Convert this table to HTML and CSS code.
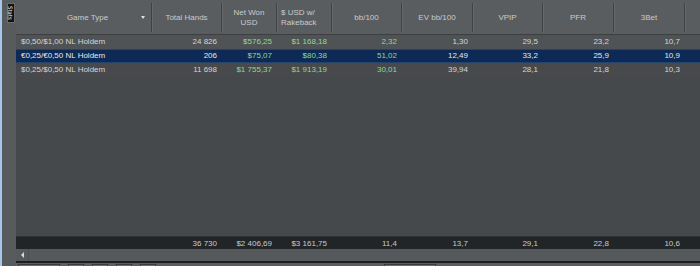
FILE: index.html
```html
<!DOCTYPE html>
<html>
<head>
<meta charset="utf-8">
<link rel="stylesheet" href="styles.css">
</head>
<body>
<div class="app">
  <div class="edge"></div>
  <div class="sidebar"><div class="tab">Stats</div></div>
  <div class="main">
    <div class="grid header">
      <div class="hc gt">Game Type<span class="arrow"></span></div>
      <div class="hc">Total Hands</div>
      <div class="hc">Net Won<br>USD</div>
      <div class="hc left">$ USD w/<br>Rakeback</div>
      <div class="hc">bb/100</div>
      <div class="hc">EV bb/100</div>
      <div class="hc">VPIP</div>
      <div class="hc">PFR</div>
      <div class="hc">3Bet</div>
      <div class="hc last"></div>
    </div>
    <div class="grid row odd">
      <div class="c l">$0,50/$1,00 NL Holdem</div>
      <div class="c">24 826</div>
      <div class="c g">$576,25</div>
      <div class="c g">$1 168,18</div>
      <div class="c g">2,32</div>
      <div class="c">1,30</div>
      <div class="c">29,5</div>
      <div class="c">23,2</div>
      <div class="c">10,7</div>
      <div class="c"></div>
    </div>
    <div class="grid row sel">
      <div class="c l">€0,25/€0,50 NL Holdem</div>
      <div class="c">206</div>
      <div class="c g">$75,07</div>
      <div class="c g">$80,38</div>
      <div class="c g">51,02</div>
      <div class="c">12,49</div>
      <div class="c">33,2</div>
      <div class="c">25,9</div>
      <div class="c">10,9</div>
      <div class="c"></div>
    </div>
    <div class="grid row even">
      <div class="c l">$0,25/$0,50 NL Holdem</div>
      <div class="c">11 698</div>
      <div class="c g">$1 755,37</div>
      <div class="c g">$1 913,19</div>
      <div class="c g">30,01</div>
      <div class="c">39,94</div>
      <div class="c">28,1</div>
      <div class="c">21,8</div>
      <div class="c">10,3</div>
      <div class="c"></div>
    </div>
    <div class="filler"></div>
    <div class="grid row total">
      <div class="c l"></div>
      <div class="c">36 730</div>
      <div class="c">$2 406,69</div>
      <div class="c">$3 161,75</div>
      <div class="c">11,4</div>
      <div class="c">13,7</div>
      <div class="c">29,1</div>
      <div class="c">22,8</div>
      <div class="c">10,6</div>
      <div class="c"></div>
    </div>
    <div class="hscroll"><div class="sbtn"><span class="larrow"></span></div></div>
    <div class="bottom">
      <div class="bseg w1"></div>
      <div class="bseg w2"></div>
      <div class="bseg w2"></div>
      <div class="bseg w2"></div>
      <div class="bseg w2"></div>
      <div class="bseg w3"></div>
    </div>
  </div>
</div>
</body>
</html>
```

FILE: styles.css
```css
html, body {
  margin: 0;
  padding: 0;
  width: 700px;
  height: 266px;
  overflow: hidden;
  background: #46494b;
  font-family: "Liberation Sans", Arial, sans-serif;
  font-size: 8px;
}
.app {
  display: flex;
  height: 266px;
}
.edge {
  width: 2px;
  background: #a7c6ec;
}
.sidebar {
  width: 14px;
  background: #585b5e;
  display: flex;
  justify-content: flex-end;
  align-items: flex-start;
  padding-top: 3px;
  box-sizing: border-box;
}
.tab {
  writing-mode: vertical-rl;
  background: #111213;
  color: #f0f0f0;
  font-family: "DejaVu Sans Condensed", "DejaVu Sans", sans-serif;
  font-size: 6px;
  width: 8px;
  height: 20px;
  line-height: 7px;
  text-align: center;
  margin-right: 1px;
  border: 1px solid #6a6d70;
  box-sizing: border-box;
}
.main {
  flex: 1;
  display: flex;
  flex-direction: column;
  min-width: 0;
}
.grid {
  display: grid;
  grid-template-columns: 136px 70px 55px 55px 70px 71px 70px 71px 71px 1fr;
}
.header {
  height: 34px;
  background: #5a5d60;
  border-bottom: 1px solid #3d3f41;
  color: #c9cbcd;
  flex: none;
}
.hc {
  display: flex;
  align-items: center;
  justify-content: center;
  text-align: center;
  line-height: 10px;
  position: relative;
  border-right: 1px solid #3f4143;
  margin: 3px 0 2px;
  box-shadow: 1px 0 0 #66696c;
}
.hc.left {
  text-align: left;
  justify-content: flex-start;
  padding-left: 4px;
}
.hc.gt {
  padding-left: 8px;
}
.hc.last {
  border-right: none;
  box-shadow: none;
}
.arrow {
  position: absolute;
  right: 6px;
  top: 13px;
  width: 0;
  height: 0;
  border-left: 2.5px solid transparent;
  border-right: 2.5px solid transparent;
  border-top: 3px solid #e0e0e0;
}
.row {
  height: 14px;
  line-height: 14px;
  color: #d3d5d7;
  flex: none;
}
.row.odd { background: #505356; }
.row.even { background: #47494c; }
.row.sel {
  background: #0c2a55;
  box-shadow: inset 0 1px 0 #24446e, inset 0 -1px 0 #24446e;
  color: #e6e8ea;
}
.c {
  text-align: right;
  padding-right: 5px;
  white-space: nowrap;
  overflow: hidden;
}
.c.l {
  text-align: left;
  padding-left: 5px;
  padding-right: 0;
}
.c.g { color: #92d88e; }
.filler {
  flex: 1;
  background: #46494b;
}
.row.total {
  height: 12px;
  line-height: 13px;
  background: #222527;
  border-top: 1px solid #2e3133;
  color: #c8cacc;
}
.hscroll {
  height: 12px;
  background: #56595c;
  display: flex;
  flex: none;
}
.sbtn {
  width: 12px;
  border-right: 1px solid #4c4f52;
  display: flex;
  align-items: center;
  justify-content: center;
}
.larrow {
  width: 0;
  height: 0;
  border-top: 3px solid transparent;
  border-bottom: 3px solid transparent;
  border-right: 3px solid #d8d8d8;
}
.bottom {
  flex: none;
  height: 2px;
  background: #5c5f62;
  border-top: 2px solid #1d1e1f;
  display: flex;
  gap: 8px;
  padding: 1px 0 0 2px;
}
.bseg {
  height: 1px;
  border: 1px solid #3a3c3e;
  border-bottom: none;
  background: #6a6d70;
}
.w1 { width: 40px; }
.w2 { width: 14px; }
.w3 { width: 50px; margin-left: 220px; }
```
